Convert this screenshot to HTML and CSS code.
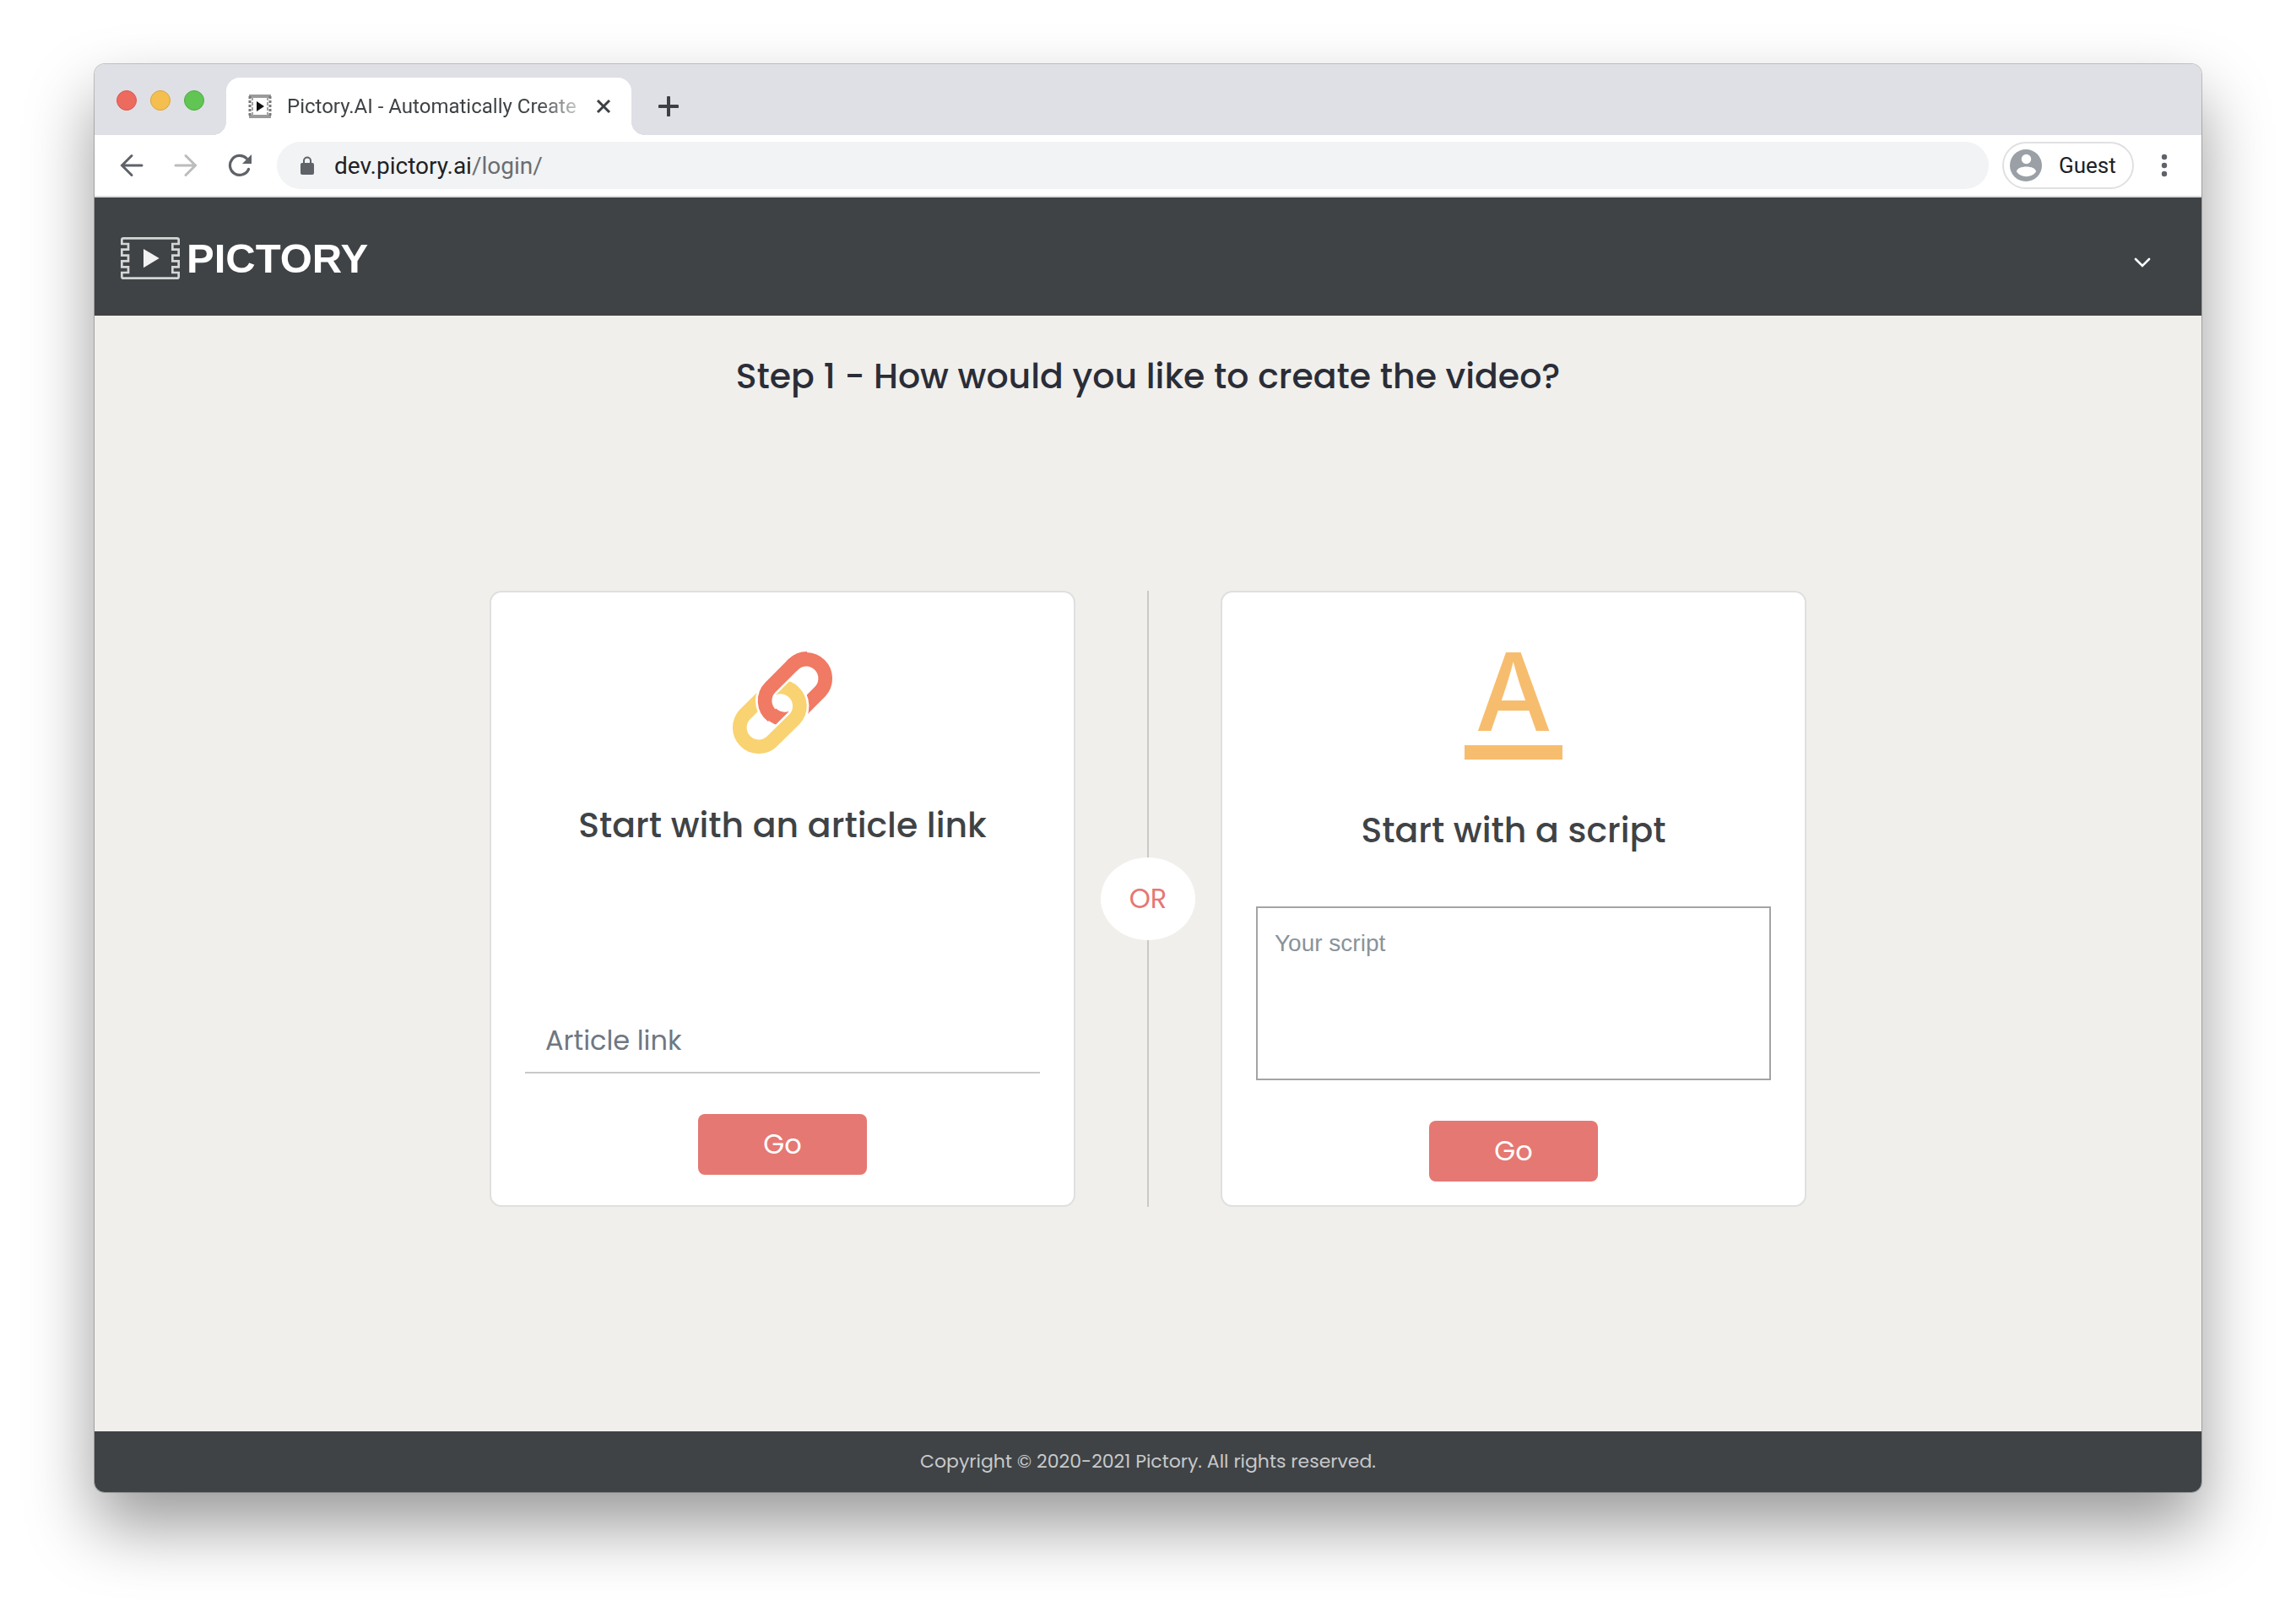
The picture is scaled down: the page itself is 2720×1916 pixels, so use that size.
FILE: index.html
```html
<!DOCTYPE html>
<html lang="en">
<head>
<meta charset="utf-8">
<meta name="viewport" content="width=device-width, initial-scale=1">
<title>Pictory.AI - Automatically Create</title>
<link rel="stylesheet" href="styles.css">
</head>
<body>
<div class="window">
  <div class="tabs">
    <div class="lights"><span class="light red"></span><span class="light amber"></span><span class="light green"></span></div>
    <div class="tab">
      <svg class="favicon" viewBox="0 0 28 28" aria-hidden="true"><path d="M1 2h26M1 26h26" stroke="#9a9a9a" stroke-width="4"/><path d="M2 2v24M26 2v24" stroke="#777" stroke-width="3" stroke-dasharray="3 2"/><path d="M5 3v22M23 3v22" stroke="#a5a5a5" stroke-width="2" stroke-dasharray="4 2"/><path d="M10 8l9 6-9 6z" fill="#111"/></svg>
      <span class="tab-title">Pictory.AI - Automatically Create</span>
      <button class="icon-button" aria-label="Close tab"><svg width="18" height="18" viewBox="0 0 18 18"><path d="M2 2l14 14M16 2L2 16" stroke="#3c4043" stroke-width="3"/></svg></button>
    </div>
    <button class="icon-button new-tab" aria-label="New tab"><svg width="24" height="24" viewBox="0 0 24 24"><path d="M12 1.500v21M1.500 12h21" stroke="#3c4043" stroke-width="4" stroke-linecap="round"/></svg></button>
  </div>
  <div class="toolbar">
    <div class="nav">
      <button class="icon-button" aria-label="Back"><svg width="28" height="28" viewBox="0 0 28 28"><path d="M26 14H3M14 2.500L2.500 14 14 25.500" fill="none" stroke="#5f6368" stroke-width="3" stroke-linecap="round"/></svg></button>
      <button class="icon-button" aria-label="Forward"><svg width="28" height="28" viewBox="0 0 28 28"><path d="M2 14h23M14 2.500L25.500 14 14 25.500" fill="none" stroke="#babcbe" stroke-width="3" stroke-linecap="round"/></svg></button>
      <button class="icon-button" aria-label="Reload"><svg width="28" height="28" viewBox="0 0 28 28"><path d="M24.500 18.500A11.500 11.500 0 1 1 22 5.700" fill="none" stroke="#5f6368" stroke-width="3.200" stroke-linecap="round"/><path d="M28 1v11H17z" fill="#5f6368"/></svg></button>
    </div>
    <div class="address" role="textbox" aria-label="Address">
      <svg width="16" height="22" viewBox="0 0 16 22" aria-hidden="true"><path d="M4 9V5.500a4 4 0 0 1 8 0V9" fill="none" stroke="#5f6368" stroke-width="2"/><rect y="8" width="16" height="14" rx="2" fill="#5f6368"/></svg>
      <span class="url">dev.pictory.ai<span class="path">/login/</span></span>
    </div>
    <button class="profile"><svg width="38" height="38" viewBox="0 0 38 38" aria-hidden="true"><circle cx="19" cy="19" r="19" fill="#9aa0a6"/><circle cx="19.500" cy="11.500" r="5.700" fill="#fff"/><path d="M8 26.500c0-8 23-8 23 0-5 7.500-18 7.500-23 0z" fill="#fff"/></svg>Guest</button>
    <button class="icon-button menu" aria-label="Browser menu"><svg width="8" height="28" viewBox="0 0 8 28"><g fill="#5f6368"><circle cx="4" cy="4" r="3.200"/><circle cx="4" cy="14" r="3.200"/><circle cx="4" cy="24" r="3.200"/></g></svg></button>
  </div>
  <header class="site-header">
    <a class="brand" href="#">
      <svg width="70" height="50" viewBox="0 0 210 150" aria-hidden="true"><path d="M10 4H200Q206 4 206 10V24H184V44H206V65H184V85H206V106H184V126H206V140Q206 146 200 146H10Q4 146 4 140V126H27V106H4V85H27V65H4V44H27V24H4V10Q4 4 10 4Z" fill="none" stroke="#d4d6d6" stroke-width="8"/><path d="M81 42l56 33-56 34z" fill="#f2f2f2"/></svg>
      <span>PICTORY</span>
    </a>
    <button class="icon-button account" aria-label="Account menu"><svg width="20" height="14" viewBox="0 0 20 14"><path d="M2 2l8 8 8-8" fill="none" stroke="#fff" stroke-width="2.600" stroke-linecap="round"/></svg></button>
  </header>
  <main class="main">
    <h1 class="heading">Step 1 - How would you like to create the video?</h1>
    <div class="options">
      <section class="card">
        <svg width="120" height="122" viewBox="78 96 360 366" fill="none" aria-hidden="true">
          <path d="M297 141A68 68 0 0 1 393 237L311 319A68 68 0 0 1 215 223Z" stroke="#f07a63" stroke-width="50"/>
          <path d="M206 239A68 68 0 0 1 302 335L219 417A68 68 0 0 1 123 321Z" stroke="#fff" stroke-width="66"/>
          <path d="M206 239A68 68 0 0 1 302 335L219 417A68 68 0 0 1 123 321Z" stroke="#f9d371" stroke-width="50"/>
          <path d="M290 148L215 223A68 68 0 0 0 215 319" stroke="#fff" stroke-width="66"/>
          <path d="M345 121A68 68 0 0 0 297 141L215 223A68 68 0 0 0 222 325" stroke="#f07a63" stroke-width="50"/>
        </svg>
        <h2 class="card-title">Start with an article link</h2>
        <form class="form link-form">
          <input class="link-input" type="text" placeholder="Article link" aria-label="Article link">
          <button class="go" type="button">Go</button>
        </form>
      </section>
      <div class="divider"><span class="or">OR</span></div>
      <section class="card">
        <div class="letter" aria-hidden="true">A</div>
        <h2 class="card-title">Start with a script</h2>
        <form class="form script-form">
          <textarea class="script-input" placeholder="Your script" aria-label="Your script"></textarea>
          <button class="go" type="button">Go</button>
        </form>
      </section>
    </div>
  </main>
  <footer class="footer">Copyright © 2020-2021 Pictory. All rights reserved.</footer>
</div>
</body>
</html>
```
FILE: styles.css
```css
* { box-sizing: border-box; }
body {
  margin: 0;
  min-height: 100vh;
  padding: 76px 112px 148px;
  display: flex;
  flex-direction: column;
  background: #fff;
  color: #3f4346;
  font-family: Poppins, Inter, sans-serif;
}
button, input, textarea { font: inherit; }
svg { display: block; flex: none; }
.icon-button { padding: 0; border: 0; background: none; display: flex; }

.window {
  flex: 1;
  display: flex;
  flex-direction: column;
  overflow: hidden;
  border-radius: 12px;
  box-shadow: 0 0 0 1px rgba(0, 0, 0, .22), 0 40px 80px rgba(0, 0, 0, .4);
}

.tabs {
  height: 84px;
  padding-left: 26px;
  display: flex;
  align-items: flex-end;
  background: #dfe0e6;
  font-family: Roboto, sans-serif;
}
.lights { display: flex; gap: 16px; align-self: center; margin: 2px 26px 0 0; }
.light { width: 24px; height: 24px; border-radius: 50%; border: 1px solid; }
.red { background: #ed6a5e; border-color: #d65a4f; }
.amber { background: #f5bf4f; border-color: #dba43c; }
.green { background: #61c554; border-color: #52ab44; }
.tab {
  position: relative;
  width: 480px;
  height: 68px;
  padding: 0 24px 0 26px;
  display: flex;
  align-items: center;
  border-radius: 16px 16px 0 0;
  background: #fff;
}
.tab::before, .tab::after {
  content: "";
  position: absolute;
  bottom: 0;
  width: 16px;
  height: 16px;
}
.tab::before { left: -16px; background: radial-gradient(circle at 0 0, transparent 16px, #fff 16px); }
.tab::after { right: -16px; background: radial-gradient(circle at 100% 0, transparent 16px, #fff 16px); }
.favicon { width: 28px; height: 28px; margin-right: 18px; }
.tab-title {
  flex: 1;
  overflow: hidden;
  margin-right: 16px;
  white-space: nowrap;
  font-size: 24px;
  -webkit-mask-image: linear-gradient(to right, #000 85%, rgba(0, 0, 0, .2));
  mask-image: linear-gradient(to right, #000 85%, rgba(0, 0, 0, .2));
}
.new-tab { align-self: center; margin: 16px 0 0 32px; }

.toolbar {
  height: 74px;
  padding: 8px 40px 8px 30px;
  display: flex;
  align-items: center;
  background: #fff;
  border-bottom: 2px solid #dadcde;
  font-family: Roboto, sans-serif;
  font-size: 26px;
  color: #202124;
}
.nav { display: flex; gap: 36px; margin-right: 30px; }
.address {
  flex: 1;
  height: 56px;
  padding: 0 28px;
  display: flex;
  align-items: center;
  gap: 24px;
  border-radius: 28px;
  background: #f1f3f4;
}
.url { font-size: 28px; }
.path { color: #6a6d71; }
.profile {
  width: 156px;
  height: 56px;
  margin: 0 32px 0 16px;
  padding: 0 0 0 7px;
  display: flex;
  align-items: center;
  gap: 20px;
  border: 2px solid #e0e0e2;
  border-radius: 28px;
  background: #fff;
  color: #202124;
}

.site-header {
  height: 140px;
  padding: 4px 60px 0 31px;
  display: flex;
  align-items: center;
  justify-content: space-between;
  background: #3f4346;
}
.brand {
  display: flex;
  align-items: center;
  gap: 8px;
  color: #fff;
  text-decoration: none;
  font: bold 49px/56px "Liberation Sans", Arial, sans-serif;
}
.account { margin-top: 12px; }

.main { flex: 1; padding: 48px 40px; background: #f0efeb; }
.heading, .card-title { margin: 0; font-size: 41px; line-height: 48px; font-weight: 500; text-align: center; }
.heading { color: #2a2d38; }
.options {
  max-width: 1560px;
  margin: 230px auto 0;
  display: grid;
  grid-template-columns: 1fr 172px 1fr;
}
.card {
  padding: 70px 40px 28px;
  display: flex;
  flex-direction: column;
  align-items: center;
  border: 2px solid #dfdfe0;
  border-radius: 14px;
  background: #fff;
}
.card-title { margin-top: 60px; }
.letter {
  width: 116px;
  height: 128px;
  border-bottom: 17px solid #f7bd6e;
  color: #f7bd6e;
  text-align: center;
  font-family: Inter, sans-serif;
  font-size: 128px;
  line-height: 96px;
  font-weight: 500;
}
.form { width: 100%; display: flex; flex-direction: column; align-items: center; gap: 48px; }
.link-form { margin-top: auto; padding-bottom: 8px; }
.script-form { margin-top: 66px; }
.link-input {
  width: 100%;
  height: 76px;
  padding: 0 24px;
  border: 0;
  border-bottom: 2px solid #c9c9c9;
  background: none;
  font-size: 32px;
}
.link-input::placeholder { color: #6f7782; opacity: 1; }
.script-input {
  width: 100%;
  height: 206px;
  padding: 24px 20px;
  border: 2px solid #a4a4a4;
  background: #fff;
  resize: none;
  font: 28px/36px "Liberation Sans", Arial, sans-serif;
}
.script-input::placeholder { color: #89939a; opacity: 1; }
.go {
  width: 200px;
  height: 72px;
  padding: 0;
  border: 0;
  border-radius: 8px;
  background: #e57873;
  color: #fff;
  font-size: 32px;
}
.divider {
  display: grid;
  place-items: center;
  background: linear-gradient(#c9c9c9, #c9c9c9) center / 2px 100% no-repeat;
}
.or {
  width: 112px;
  border-radius: 50%;
  background: #fff;
  color: #e57873;
  text-align: center;
  font-size: 32px;
  line-height: 98px;
}

.footer {
  height: 72px;
  background: #3f4346;
  color: #c8c9ca;
  text-align: center;
  font-size: 22px;
  line-height: 72px;
}
```
